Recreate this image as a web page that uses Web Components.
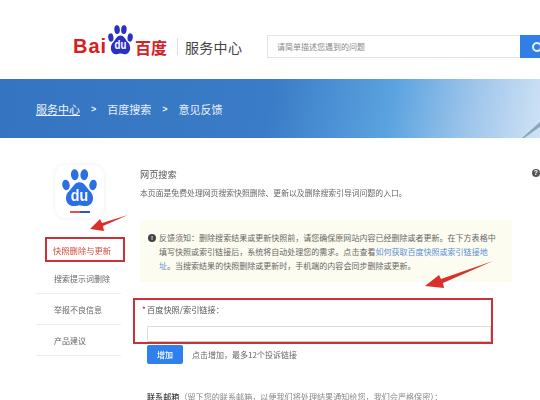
<!DOCTYPE html>
<html lang="zh">
<head>
<meta charset="utf-8">
<style>
    html, body { margin: 0; padding: 0; background: #fff; }
    body { width: 540px; height: 400px; overflow: hidden; position: relative;
        font-family: "Liberation Sans", "Noto Sans CJK SC", sans-serif; }
</style>
</head>
<body>
<help-page>
    <site-header slot="header"></site-header>
    <crumb-banner slot="banner">
        <a>服务中心</a><i>&gt;</i><span>百度搜索</span><i>&gt;</i><span>意见反馈</span>
    </crumb-banner>
    <side-nav slot="side">
        <nav-item active>快照删除与更新</nav-item>
        <nav-item>搜索提示词删除</nav-item>
        <nav-item>举报不良信息</nav-item>
        <nav-item>产品建议</nav-item>
    </side-nav>
    <report-form slot="main"></report-form>
</help-page>
<script>
    // paw used by the header logo and the sidebar tile
    const PAW = `
        <ellipse cx="8" cy="21" rx="4.6" ry="6" transform="rotate(-14 8 21)"/>
        <ellipse cx="19" cy="9.5" rx="4.8" ry="6.3" transform="rotate(-6 19 9.5)"/>
        <ellipse cx="31" cy="9.5" rx="4.8" ry="6.3" transform="rotate(6 31 9.5)"/>
        <ellipse cx="42" cy="21" rx="4.6" ry="6" transform="rotate(14 42 21)"/>
        <path d="M25 18c6 0 8 5 12 9 4 3 5 6 5 9 0 6-5 9-10 9-3 0-5-1-7-1s-4 1-7 1c-5 0-10-3-10-9 0-3 1-6 5-9 4-4 6-9 12-9z"/>`;

    class HelpPage extends HTMLElement {
        constructor() {
            super();
            this.attachShadow({ mode: "open" });
            this.shadowRoot.innerHTML = `
                <style>
                    :host { display: block; width: 540px; height: 400px; position: relative; overflow: hidden; filter: blur(.3px); }
                    .body { display: flex; padding: 27px 0 0 36px; }
                    .overlay { position: absolute; left: 0; top: 0; pointer-events: none; }
                </style>
                <slot name="header"></slot>
                <slot name="banner"></slot>
                <div class="body">
                    <slot name="side"></slot>
                    <slot name="main"></slot>
                </div>
                <svg class="overlay" width="540" height="400" fill="#d9302c">
                    <path d="M128 215 L102 223 L100 219 L90 229 L104 231 L103 226 Z"/>
                    <path d="M493 261 L441 279 L439 275 L425 286 L444 288 L443 283 Z"/>
                </svg>`;
        }
    }

    class SiteHeader extends HTMLElement {
        constructor() {
            super();
            this.attachShadow({ mode: "open" });
            this.shadowRoot.innerHTML = `
                <style>
                    :host { display: flex; align-items: center; height: 79px; padding: 14px 0 0 73px;
                        box-sizing: border-box; background: #fff; }
                    .logo { display: flex; align-items: center; width: 94px; height: 30px; flex: none; }
                    .bai { font: bold 20px "Liberation Sans", sans-serif; color: #d5201f; letter-spacing: 1px; width: 35px; flex: none; }
                    .paw { width: 25px; height: 30px; margin-bottom: 13px; flex: none; }
                    .baidu { font: bold 16px/16px "Noto Sans CJK SC", sans-serif; color: #d5201f; margin-left: 2px; white-space: nowrap; }
                    .sep { width: 1px; height: 17px; background: #ddd; margin: 0 7px 0 10px; flex: none; }
                    .title { font: 14px "Noto Sans CJK SC", sans-serif; color: #444; width: 82px; flex: none; letter-spacing: .3px; }
                    .search { display: flex; width: 273px; height: 23px; flex: none; }
                    .box { flex: 1; border: 1px solid #e3e3e3; border-right: 0; display: flex; align-items: center;
                        padding-left: 9px; font: 8px "Noto Sans CJK SC", sans-serif; color: #888; }
                    .go { width: 20px; background: #2f7fe6; display: flex; align-items: center; justify-content: flex-end; }
                    .go svg { margin-right: -3px; }
                </style>
                <div class="logo">
                    <span class="bai">Bai</span>
                    <svg class="paw" viewBox="3 3 44 43" preserveAspectRatio="none" fill="#2932c0">${PAW}
                        <text x="25" y="38" text-anchor="middle" font-family="Liberation Sans" font-weight="bold" font-size="17" fill="#fff">du</text>
                    </svg>
                    <span class="baidu">百度</span>
                </div>
                <div class="sep"></div>
                <div class="title">服务中心</div>
                <div class="search">
                    <div class="box">请简单描述您遇到的问题</div>
                    <div class="go">
                        <svg width="12" height="12" viewBox="0 0 12 12" fill="none" stroke="#e9f2fd" stroke-width="2"><circle cx="6" cy="6" r="4"/></svg>
                    </div>
                </div>`;
        }
    }

    class CrumbBanner extends HTMLElement {
        constructor() {
            super();
            this.attachShadow({ mode: "open" });
            this.shadowRoot.innerHTML = `
                <style>
                    :host { display: flex; align-items: center; height: 59px; padding-left: 36px; box-sizing: border-box; position: relative;
                        background: linear-gradient(100deg, #3574c0 0%, #3a7cc7 50%, #5ba3e0 72%, #9cc4ea 86%, #cfe2f6 100%);
                        font: 11px "Noto Sans CJK SC", sans-serif; color: #e9f1fb; }
                    /* grey wedge in the bottom right of the banner picture */
                    :host::after { content: ""; position: absolute; right: 0; bottom: 0; width: 18px; height: 16px;
                        background: #8aa6b8; clip-path: polygon(100% 0, 100% 30%, 12% 100%, 0 100%); }
                    ::slotted(a) { text-decoration: underline; color: #eef5fd; }
                    ::slotted(i) { font: bold 9px "Liberation Sans", sans-serif; margin: 0 11px; color: #eef5fd; }
                </style>
                <slot></slot>`;
        }
    }

    class SideNav extends HTMLElement {
        constructor() {
            super();
            this.attachShadow({ mode: "open" });
            this.shadowRoot.innerHTML = `
                <style>
                    :host { display: block; width: 88px; flex: none; }
                    .tile { width: 49px; height: 53px; margin: 0 0 19px 19px; border-radius: 10px; background: #fff;
                        box-shadow: 0 0 4px rgba(0,0,0,.08); display: flex; flex-direction: column; align-items: center; padding-top: 4px; box-sizing: border-box; }
                    .tile svg { width: 35px; height: 38px; flex: none; }
                    .bar { width: 20px; height: 2px; margin-top: 4px; background: linear-gradient(90deg, #d9534f 50%, #2f55c8 50%); flex: none; }
                </style>
                <div class="tile">
                    <svg viewBox="3 3 44 43" preserveAspectRatio="none" fill="#2a6fe3">${PAW}
                        <text x="25" y="39" text-anchor="middle" font-family="Liberation Sans" font-weight="bold" font-size="18" fill="#fff">du</text>
                    </svg>
                    <div class="bar"></div>
                </div>
                <slot></slot>`;
        }
    }

    class NavItem extends HTMLElement {
        constructor() {
            super();
            this.attachShadow({ mode: "open" });
            this.shadowRoot.innerHTML = `
                <style>
                    :host { display: flex; align-items: center; height: 31px; width: 85px; padding-left: 18px;
                        box-sizing: border-box; border-bottom: 1px solid #eee;
                        font: 8px "Noto Sans CJK SC", sans-serif; color: #666; }
                    :host([active]) { height: 25px; width: 80px; margin: 0 0 1px 9px; padding-left: 6px; border: 2px solid #cb3238;
                        color: #d04a3c; font-size: 8.3px; }
                </style>
                <slot></slot>`;
        }
    }

    class ReportForm extends HTMLElement {
        constructor() {
            super();
            this.attachShadow({ mode: "open" });
            this.shadowRoot.innerHTML = `
                <style>
                    :host { display: block; flex: 1; padding-left: 16px; font: 8px "Noto Sans CJK SC", sans-serif; color: #666; position: relative; }
                    h2 { font: 9.2px/14px "Noto Sans CJK SC", sans-serif; color: #555; margin: 2px 0 5px; }
                    .desc { line-height: 14px; height: 14px; white-space: nowrap; font-size: 7.85px; }
                    .help { position: absolute; right: 0; top: 4px; width: 8px; height: 8px; border-radius: 50%;
                        background: #555; color: #fff; font: bold 7px/8px "Liberation Sans", sans-serif; text-align: center; }
                    .notice { margin: 20px 28px 0 0; height: 62px; background: #fdfcf0; padding: 11px 0 0 19px; box-sizing: border-box;
                        line-height: 14px; position: relative; font-size: 8.03px; white-space: nowrap; }
                    .notice b { position: absolute; left: 8px; top: 14px; width: 8px; height: 8px; border-radius: 50%;
                        background: #444; color: #fff; font: bold 6px/8px "Liberation Sans", sans-serif; text-align: center; }
                    .notice a { color: #5b8fd8; }
                    .field { margin: 16px 0 0 -7px; width: 360px; height: 46px; border: 2px solid #cb3238;
                        box-sizing: border-box; padding: 2px 0 0 7px; }
                    .field label { display: block; line-height: 14px; color: #555; font-size: 8.2px; white-space: nowrap; }
                    .field em { display: inline-block; width: 5px; color: #c8242b; font-style: normal; }
                    .field input { display: block; box-sizing: border-box; width: 344px; height: 16px; margin: 10px 0 0 5px; border: 1px solid #ddd; border-bottom-color: #ccc; background: #fff; padding: 0; outline: 0; }
                    .add { display: flex; align-items: center; gap: 9px; margin: 1px 0 0 7px; }
                    button { width: 36px; height: 19px; border: 0; border-radius: 2px; background: #2f80ed; color: #fff; padding: 0;
                        font: 500 8px "Noto Sans CJK SC", sans-serif; }
                    .contact { margin: 26px 0 0 7px; white-space: nowrap; line-height: 14px; color: #888; font-size: 8.1px; }
                    .contact strong { color: #444; font-weight: 500; }
                </style>
                <h2>网页搜索</h2>
                <div class="help">?</div>
                <div class="desc">本页面是免费处理网页搜索快照删除、更新以及删除搜索引导词问题的入口。</div>
                <div class="notice">
                    <b>!</b>反馈须知：删除搜索结果或更新快照前，请您确保原网站内容已经删除或者更新。在下方表格中<br>填写快照或索引链接后，系统将自动处理您的需求。点击查看<a>如何获取百度快照或索引链接地<br>址</a>。当搜索结果的快照删除或更新时，手机端的内容会同步删除或更新。
                </div>
                <div class="field">
                    <label><em>*</em>百度快照/索引链接：</label>
                    <input type="text">
                </div>
                <div class="add">
                    <button type="button">增加</button>
                    <span>点击增加，最多12个投诉链接</span>
                </div>
                <div class="contact"><strong>联系邮箱</strong>（留下您的联系邮箱，以便我们将处理结果通知给您，我们会严格保密）：</div>`;
        }
    }

    customElements.define("help-page", HelpPage);
    customElements.define("site-header", SiteHeader);
    customElements.define("crumb-banner", CrumbBanner);
    customElements.define("side-nav", SideNav);
    customElements.define("nav-item", NavItem);
    customElements.define("report-form", ReportForm);
</script>
</body>
</html>
